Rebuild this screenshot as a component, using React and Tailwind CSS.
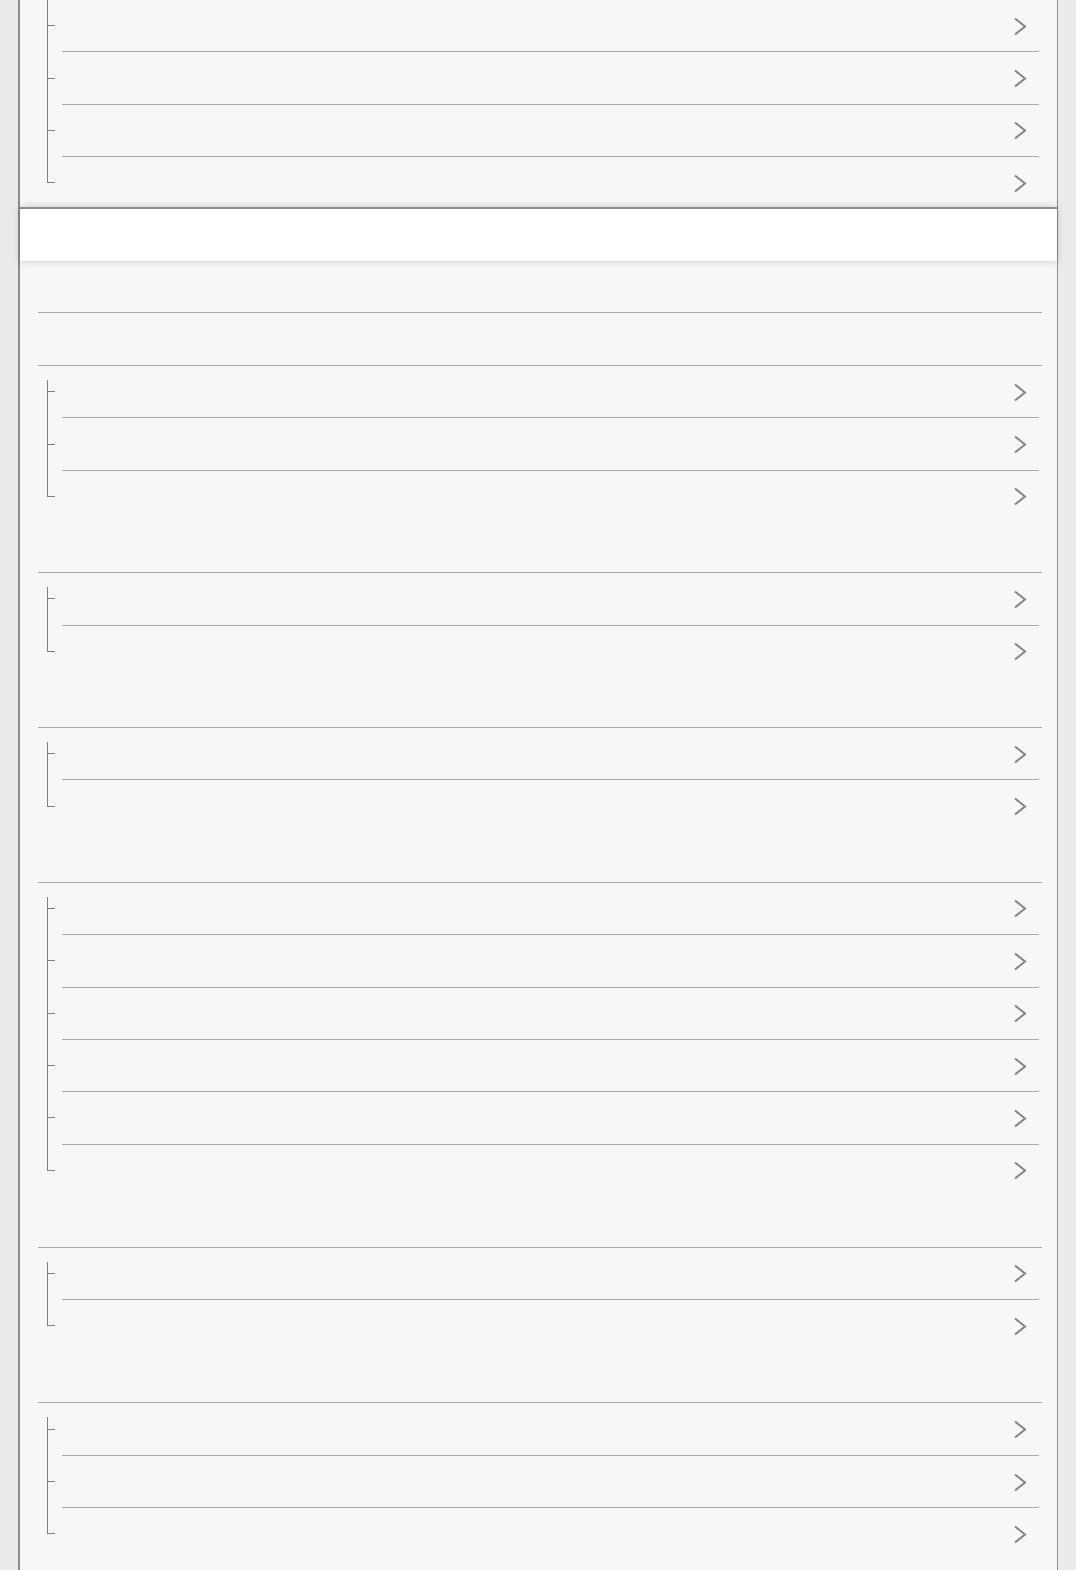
import React from 'react';

const groups = [
  { title: 'h-[52px]', extra: true, count: 3 },
  { title: 'h-[51px]', count: 2 },
  { title: 'h-[51px]', count: 2 },
  { title: 'h-[51px]', count: 6 },
  { title: 'h-[51.6px]', count: 2 },
  { title: 'h-[52px]', count: 3 },
];

function Chevron() {
  return (
    <svg width="14" height="19" viewBox="0 0 14 19" className="shrink-0 mt-[1px]">
      <polyline points="2,1.5 12,9.5 2,17.5" fill="none" stroke="#858585" strokeWidth="2" />
    </svg>
  );
}

function TreeItem({ first, last, cont }) {
  return (
    <div className={`flex ${last ? 'h-[51.4px]' : 'h-[52.4px]'}`}>
      <div className="relative w-[42px] shrink-0">
        {/* vertical branch line */}
        <div
          className={`absolute left-[27px] w-px bg-[#7f7f7f] ${
            first && !cont ? 'top-[14px]' : 'top-0'
          } ${last ? 'bottom-1/2' : 'bottom-0'}`}
        />
        {/* tick */}
        <div className="absolute left-[27px] top-[25.2px] h-px w-[8px] bg-[#7f7f7f]" />
      </div>
      <div
        className={`flex flex-1 items-center justify-end mr-[18px] pr-[12px] ${
          last ? '' : 'border-b border-[#aaaaaa]'
        }`}
      >
        <Chevron />
      </div>
    </div>
  );
}

function TreeList({ count, cont }) {
  return (
    <div>
      {Array.from({ length: count }).map((_, i) => (
        <TreeItem key={i} first={i === 0} last={i === count - 1} cont={cont} />
      ))}
    </div>
  );
}

export default function App() {
  return (
    <div className="min-h-screen bg-[#ebebeb] font-['Liberation_Sans',sans-serif]">
      <div className="ml-[18px] w-[1040px] min-h-[1570px] bg-[#f7f7f7] border-l-2 border-r border-[#8c8c8c]">
        {/* previous group, scrolled partly out of view */}
        <div className="h-[207px] overflow-hidden">
          <TreeList count={4} cont />
        </div>

        {/* white header bar */}
        <div className="relative z-10 h-[54px] border-t-2 border-[#8c8c8c] bg-white shadow-[0_0_8px_rgba(0,0,0,0.2)]" />

        {groups.map((g, gi) => (
          <div key={gi}>
            <div className={`${g.title} ml-[18px] mr-[15px] border-b border-[#aaaaaa]`} />
            {g.extra && <div className="h-[53px] ml-[18px] mr-[15px] border-b border-[#aaaaaa]" />}
            <TreeList count={g.count} />
          </div>
        ))}
      </div>
    </div>
  );
}
